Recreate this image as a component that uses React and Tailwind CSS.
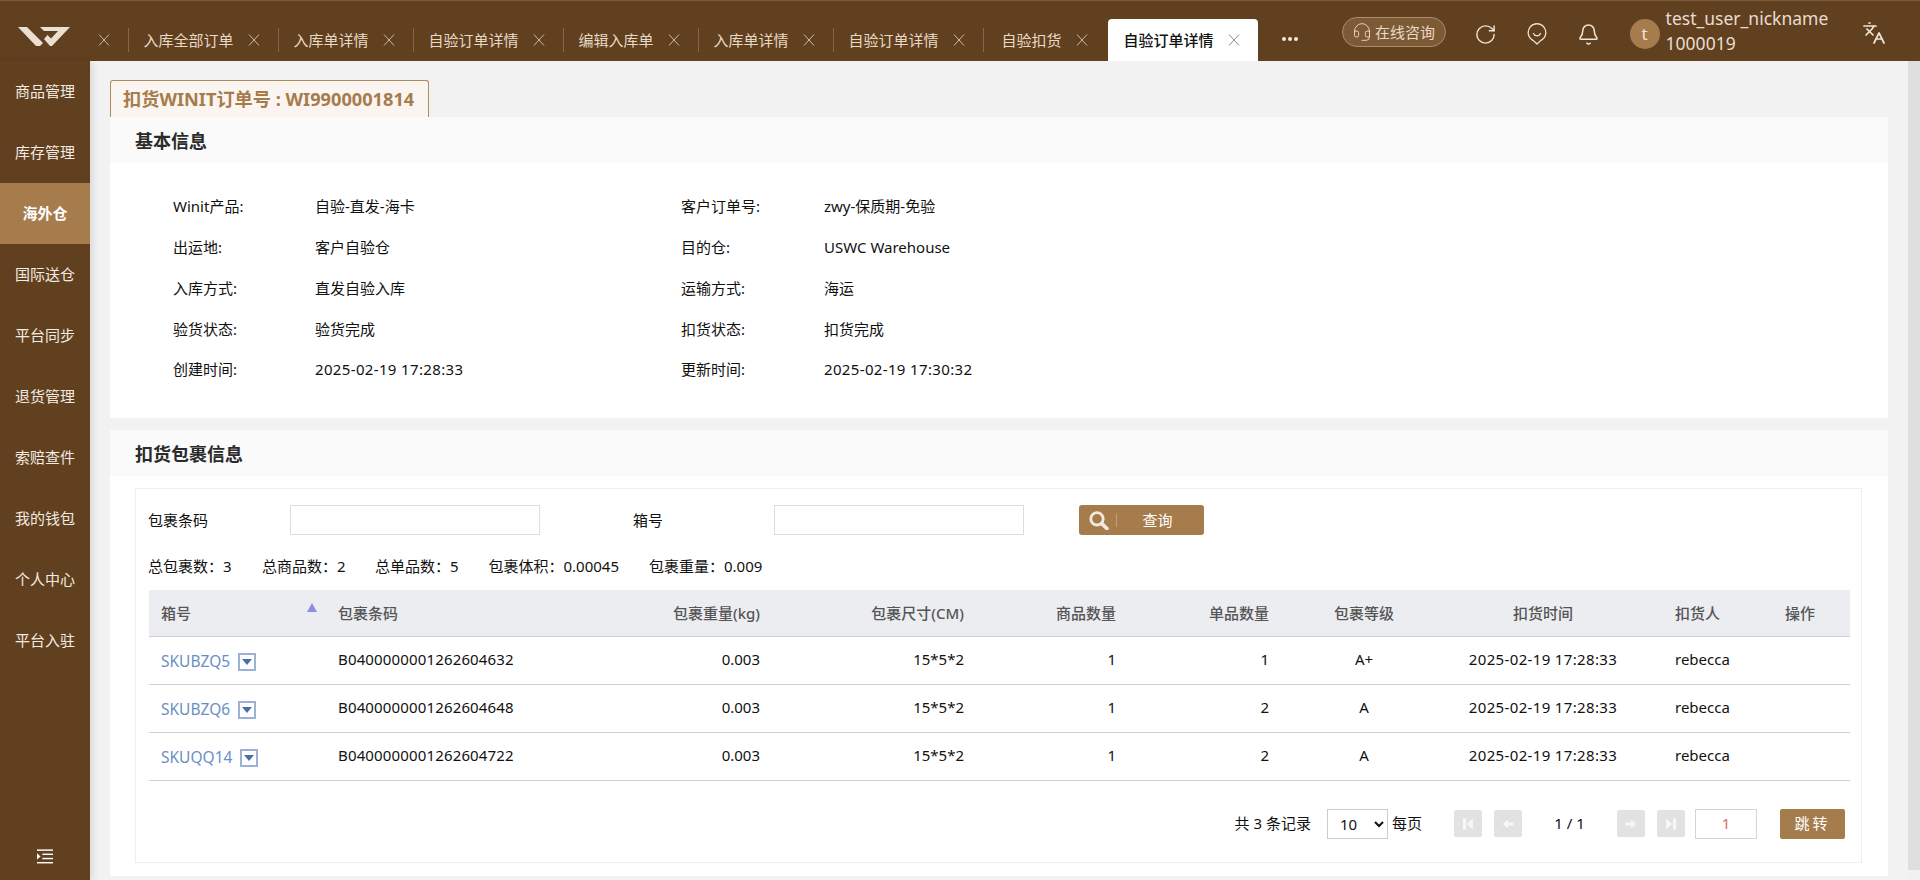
import React from "react";
import { RotateCw, Bell, Languages, Headset } from "lucide-react";

const FONT = "font-['Noto_Sans','Noto_Sans_CJK_SC',sans-serif]";

const tabs = ["入库全部订单", "入库单详情", "自验订单详情", "编辑入库单", "入库单详情", "自验订单详情"];

const menu = ["商品管理", "库存管理", "海外仓", "国际送仓", "平台同步", "退货管理", "索赔查件", "我的钱包", "个人中心", "平台入驻"];

const info = [
  ["Winit产品:", "自验-直发-海卡", "客户订单号:", "zwy-保质期-免验"],
  ["出运地:", "客户自验仓", "目的仓:", "USWC Warehouse"],
  ["入库方式:", "直发自验入库", "运输方式:", "海运"],
  ["验货状态:", "验货完成", "扣货状态:", "扣货完成"],
  ["创建时间:", "2025-02-19 17:28:33", "更新时间:", "2025-02-19 17:30:32"],
];

const rows = [
  ["SKUBZQ5", "B0400000001262604632", "0.003", "15*5*2", "1", "1", "A+"],
  ["SKUBZQ6", "B0400000001262604648", "0.003", "15*5*2", "1", "2", "A"],
  ["SKUQQ14", "B0400000001262604722", "0.003", "15*5*2", "1", "2", "A"],
];

function TabX({ active }) {
  return (
    <svg width="12" height="12" viewBox="0 0 12 12" fill="none" stroke={active ? "#8f8f8f" : "#cdb9a2"} strokeWidth="1">
      <path d="M1 0.5L11 11.5M11 0.5L1 11.5" />
    </svg>
  );
}

function Logo() {
  return (
    <svg width="52" height="20" viewBox="0 0 52 20" className="ml-[18px] shrink-0">
      <path d="M0 0H9L25 16L22 19H18Z" fill="#eadfd0" />
      <path d="M22 0H52L34 19H32L26 12L29.5 8L33 11.5L40 4H26Z" fill="#eadfd0" />
    </svg>
  );
}

function FaceIcon() {
  return (
    <svg width="20" height="22" viewBox="0 0 20 22" fill="none" stroke="#f0e4d4" strokeWidth="1.3">
      <path d="M10 21L6.4 17.6A8.8 8.8 0 1 1 13.6 17.6Z" strokeLinejoin="round" />
      <path d="M6.5 10.5A3.8 3.8 0 0 0 13.5 10.5" strokeLinecap="round" />
    </svg>
  );
}

function SearchIcon() {
  return (
    <svg width="20" height="19" viewBox="0 0 20 19" fill="none" stroke="#f3e9dc">
      <circle cx="8" cy="7.8" r="6.2" strokeWidth="2.8" />
      <path d="M12.8 12.6L18 17.6" strokeWidth="3.6" strokeLinecap="round" />
    </svg>
  );
}

function PagerBtn({ kind }) {
  return (
    <span className="w-[28px] h-[27px] bg-[#e2e2e2] rounded-[2px] flex items-center justify-center">
      <svg width="14" height="14" viewBox="0 0 14 14" fill="#f7f7f7">
        {kind === "first" && <path d="M2 1.5H5V12.5H2ZM12 1.5V12.5L5.5 7Z" />}
        {kind === "prev" && <path d="M7 2.5V5.5H12.5V8.5H7V11.5L1.5 7Z" />}
        {kind === "next" && <path d="M7 2.5V5.5H1.5V8.5H7V11.5L12.5 7Z" />}
        {kind === "last" && <path d="M12 1.5H9V12.5H12ZM2 1.5V12.5L8.5 7Z" />}
      </svg>
    </span>
  );
}

function Dropdown() {
  return (
    <span className="w-[18px] h-[18px] ml-[8px] border-2 border-[#9db0d6] bg-white flex items-center justify-center shrink-0">
      <svg width="10" height="6" viewBox="0 0 10 6"><path d="M0 0H10L5 6Z" fill="#4a6fb0" /></svg>
    </span>
  );
}

export default function App() {
  return (
    <div className={`${FONT} w-[1920px] h-[880px] overflow-hidden flex flex-col bg-[#f2f2f2] text-[15px] text-[#111]`}>
      <header className="h-[61px] shrink-0 bg-[#61401f] border-t border-[#7a5c3d] flex items-end">
        <div className="h-[60px] flex items-center self-stretch w-[90px] shrink-0 pt-[11px]"><Logo /></div>
        <div className="flex items-center h-[42px] text-[#e8d9c6] text-[15px]">
          <div className="flex items-center h-[24px] w-[39px] pl-[8px] border-r border-[#84664a]"><TabX /></div>
          {tabs.map((t, i) => (
            <div key={i} className="flex items-center h-[24px] pl-[14.5px] pr-[18.5px] border-r border-[#84664a] whitespace-nowrap">
              <span>{t}</span>
              <span className="ml-[14px] flex"><TabX /></span>
            </div>
          ))}
          <div className="flex items-center h-[24px] pl-[17.5px] whitespace-nowrap w-[124px]">
            <span>自验扣货</span>
            <span className="ml-[14px] flex"><TabX /></span>
          </div>
        </div>
        <div className="h-[42px] w-[149.5px] bg-white rounded-t-[4px] flex items-center pl-[15.5px] text-[15px] font-medium text-[#111] whitespace-nowrap">
          <span>自验订单详情</span>
          <span className="ml-[14px] flex"><TabX active /></span>
        </div>
        <div className="flex items-center self-start h-[60px] flex-1 min-w-0">
          <span className="ml-[24px] flex gap-[2px] mt-[15px]">
            <i className="w-[4px] h-[4px] rounded-full bg-[#f2e9dd]" /><i className="w-[4px] h-[4px] rounded-full bg-[#f2e9dd]" /><i className="w-[4px] h-[4px] rounded-full bg-[#f2e9dd]" />
          </span>
          <div className="ml-[44px] w-[104px] h-[30px] rounded-full border border-[#a98d6e] bg-[#7d5a36] flex items-center justify-center gap-[3px] text-[#e8d9c6] text-[15px] mt-[2px]">
            <Headset size={20} strokeWidth={1.1} />
            <span>在线咨询</span>
          </div>
          <RotateCw size={23} strokeWidth={1.5} className="ml-[28px] text-[#f0e4d4] mt-[6px]" />
          <span className="ml-[30.5px] flex mt-[6px]"><FaceIcon /></span>
          <Bell size={23} strokeWidth={1.6} className="ml-[30px] text-[#f0e4d4] mt-[6px]" />
          <span className="ml-[29.5px] w-[30px] h-[30px] rounded-full bg-[#a67c4c] text-[#f0e4d4] flex items-center justify-center text-[17px] mt-[6px]">t</span>
          <div className="ml-[6px] text-[17.5px] leading-[25px] text-[#e8ddd0] whitespace-nowrap">
            <div>test_user_nickname</div>
            <div>1000019</div>
          </div>
          <Languages size={24} strokeWidth={1.7} className="ml-[34px] text-[#f0e4d4] mt-[4px]" />
        </div>
      </header>

      <div className="flex flex-1 min-h-0">
        <aside className="w-[90px] shrink-0 bg-[#61401f] flex flex-col relative z-10 shadow-[2px_0_8px_rgba(0,0,0,0.12)]">
          {menu.map((m, i) => (
            <div key={m} className={`h-[61px] shrink-0 flex items-center justify-center text-[15px] ${i === 2 ? "bg-[#a67c4c] text-white font-bold" : "text-[#f3ebe1]"}`}>{m}</div>
          ))}
          <div className="mt-auto h-[41px] flex justify-center pt-[10px]">
            <svg width="16" height="15" viewBox="0 0 18 16" fill="#fff">
              <rect x="0" y="0" width="18" height="1.6" />
              <rect x="6" y="4.7" width="12" height="1.6" />
              <rect x="6" y="9.5" width="12" height="1.6" />
              <rect x="0" y="14.2" width="18" height="1.6" />
              <path d="M0 4.4L4 7.9L0 11.4Z" />
            </svg>
          </div>
        </aside>

        <main className="flex-1 min-w-0 flex">
          <div className="flex-1 min-w-0 pl-[20px] pr-[20px] pt-[19px]">
            <div className="h-[37px] w-[319px] bg-[#faf5f0] border border-b-0 border-[#b08a5c] rounded-t-[3px] flex items-center pl-[12px] text-[18.2px] font-bold text-[#a67c4c] whitespace-nowrap">
              <span className="mt-[1px]">扣货WINIT订单号 : WI9900001814</span>
            </div>

            <section className="bg-white h-[301px]">
              <h2 className="h-[46px] bg-[#fafafa] flex items-center pl-[25px] pt-[3px] text-[18px] font-bold text-[#2b2b2b]">基本信息</h2>
              <div className="pt-[23px] pl-[63px]">
                {info.map((r) => (
                  <div key={r[0]} className="h-[40.8px] flex items-center whitespace-nowrap">
                    <span className="w-[142px]">{r[0]}</span>
                    <span className={`w-[366px] ${r[1].startsWith("2025") ? "tracking-[0.35px]" : ""}`}>{r[1]}</span>
                    <span className="w-[143px]">{r[2]}</span>
                    <span className={r[3].startsWith("2025") ? "tracking-[0.35px]" : ""}>{r[3]}</span>
                  </div>
                ))}
              </div>
            </section>

            <section className="bg-white mt-[12px] h-[446px]">
              <h2 className="h-[46px] bg-[#fafafa] flex items-center pl-[25px] pt-[3px] text-[18px] font-bold text-[#2b2b2b]">扣货包裹信息</h2>
              <div className="mt-[12px] ml-[25px] mr-[26px] h-[375px] border border-[#eeeeee] pl-[12px] pr-[11px] pt-[16px]">
                <div className="flex items-center h-[30px]">
                  <span className="w-[142px]">包裹条码</span>
                  <input className="w-[250px] h-[30px] border border-[#dddddd] outline-none" />
                  <span className="ml-[93px] w-[141px]">箱号</span>
                  <input className="w-[250px] h-[30px] border border-[#dddddd] outline-none" />
                  <button className="ml-[55px] w-[125px] h-[30px] bg-[#a67c4c] rounded-[3px] text-white text-[15px] flex items-center">
                    <span className="w-[37px] flex justify-center items-center pl-[3px]"><SearchIcon /></span>
                    <span className="w-px h-[13px] bg-[#c49f72]" />
                    <span className="flex-1 text-center pr-[6px]">查询</span>
                  </button>
                </div>
                <div className="flex items-center h-[20px] mt-[21px] whitespace-nowrap">
                  <span className="w-[114px]">总包裹数：3</span>
                  <span className="w-[113px]">总商品数：2</span>
                  <span className="w-[113.5px]">总单品数：5</span>
                  <span className="w-[160.5px]">包裹体积：0.00045</span>
                  <span>包裹重量：0.009</span>
                </div>
                <table className="mt-[14px] ml-[1px] w-[1701px] table-fixed border-collapse">
                  <colgroup>
                    <col className="w-[177px]" /><col className="w-[234px]" /><col className="w-[212px]" /><col className="w-[204px]" /><col className="w-[152px]" /><col className="w-[153px]" /><col className="w-[166px]" /><col className="w-[192px]" /><col className="w-[134px]" /><col className="w-[77px]" />
                  </colgroup>
                  <thead>
                    <tr className="h-[46px] bg-[#ecedf1] border-b border-[#c9d0da] text-[#555]">
                      <th className="px-[12px] text-left font-medium relative">箱号
                        <svg width="10" height="9" viewBox="0 0 10 9" className="absolute right-[9px] top-[13px]"><path d="M5 0L10 9H0Z" fill="#8a8fe0" /></svg>
                      </th>
                      <th className="px-[12px] text-left font-medium">包裹条码</th>
                      <th className="px-[12px] text-right font-medium">包裹重量(kg)</th>
                      <th className="px-[12px] text-right font-medium">包裹尺寸(CM)</th>
                      <th className="px-[12px] text-right font-medium">商品数量</th>
                      <th className="px-[12px] text-right font-medium">单品数量</th>
                      <th className="px-[12px] text-center font-medium">包裹等级</th>
                      <th className="px-[12px] text-center font-medium">扣货时间</th>
                      <th className="pl-[36px] text-left font-medium">扣货人</th>
                      <th className="px-[12px] text-left font-medium">操作</th>
                    </tr>
                  </thead>
                  <tbody>
                    {rows.map((r) => (
                      <tr key={r[0]} className="h-[48px] border-b border-[#c9d0da]">
                        <td className="px-[12px] pt-[3px]"><span className="flex items-center text-[#6a8fc4] text-[15.5px]">{r[0]}<Dropdown /></span></td>
                        <td className="px-[12px] tracking-[0.15px] pb-[1px]">{r[1]}</td>
                        <td className="px-[12px] text-right pb-[1px]">{r[2]}</td>
                        <td className="px-[12px] text-right pb-[1px]">{r[3]}</td>
                        <td className="px-[12px] text-right pb-[1px]">{r[4]}</td>
                        <td className="px-[12px] text-right pb-[1px]">{r[5]}</td>
                        <td className="px-[12px] text-center pb-[1px]">{r[6]}</td>
                        <td className="px-[12px] text-center whitespace-nowrap tracking-[0.35px] pb-[1px]">2025-02-19 17:28:33</td>
                        <td className="pl-[36px] pb-[1px]">rebecca</td>
                        <td />
                      </tr>
                    ))}
                  </tbody>
                </table>
                <div className="flex items-center justify-end mt-[28px] h-[30px] pr-[5px] whitespace-nowrap">
                  <span>共 3 条记录</span>
                  <select defaultValue="10" className="ml-[16px] w-[61px] h-[30px] border border-[#cccccc] bg-white px-[8px] text-[15px]"><option>10</option></select>
                  <span className="ml-[4px]">每页</span>
                  <span className="ml-[32px] flex gap-[12px]"><PagerBtn kind="first" /><PagerBtn kind="prev" /></span>
                  <span className="w-[95px] text-center">1 / 1</span>
                  <span className="flex gap-[12px]"><PagerBtn kind="next" /><PagerBtn kind="last" /></span>
                  <span className="ml-[10px] w-[62px] h-[30px] border border-[#d5d5d5] flex items-center justify-center text-[#e06a5a]">1</span>
                  <button className="ml-[23px] w-[65px] h-[30px] rounded-[2px] bg-[#a67c4c] text-white text-[15px] tracking-[3px]">跳转</button>
                </div>
              </div>
            </section>
          </div>
          <div className="w-[12px] shrink-0 bg-[#f1f1f1]">
            <div className="h-[809px] bg-[#dfdfdf]" />
          </div>
        </main>
      </div>
    </div>
  );
}
